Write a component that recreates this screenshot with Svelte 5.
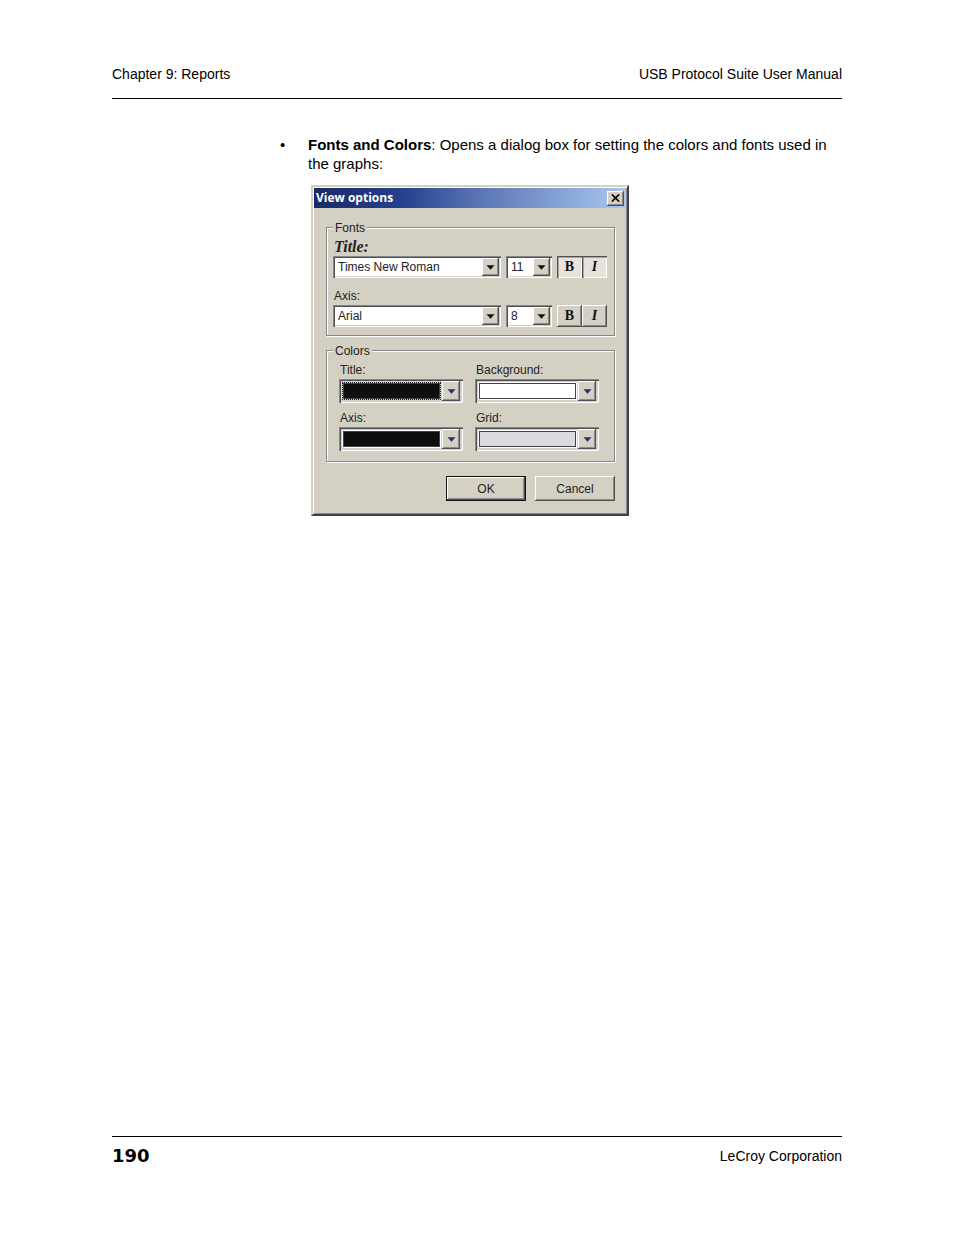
<script>
  const fontRows = $state([
    { id: 'title', label: 'Title:', font: 'Times New Roman', size: '11', bold: true, italic: true },
    { id: 'axis', label: 'Axis:', font: 'Arial', size: '8', bold: false, italic: false }
  ]);
  const fonts = ['Times New Roman', 'Arial'];
  const sizes = ['8', '11'];
  const colors = [
    { id: 'color-title', label: 'Title:', value: '#0e0e0c', focused: true },
    { id: 'color-background', label: 'Background:', value: '#ffffff' },
    { id: 'color-axis', label: 'Axis:', value: '#0e0e0c' },
    { id: 'color-grid', label: 'Grid:', value: '#dcdadc' }
  ];
</script>

{#snippet arrow()}
  <svg width="9" height="5" viewBox="0 0 9 5" aria-hidden="true"><path d="M0.5 0.3H8.5L4.5 4.7Z" fill="currentColor" /></svg>
{/snippet}

<div class="page">
  <header>
    <span>Chapter 9: Reports</span>
    <span>USB Protocol Suite User Manual</span>
  </header>

  <main>
    <ul>
      <li><p><strong>Fonts and Colors</strong>: Opens a dialog box for setting the colors and fonts used in the graphs:</p></li>
    </ul>

    <section class="dialog" role="dialog" aria-labelledby="dialog-title">
      <div class="titlebar">
        <span id="dialog-title">View options</span>
        <button class="close raised" aria-label="Close">
          <svg width="9" height="8" viewBox="0 0 9 8" aria-hidden="true"><path d="M0.8 0.3L8.2 7.7M8.2 0.3L0.8 7.7" stroke="#111" stroke-width="1.7" /></svg>
        </button>
      </div>

      <div class="content">
        <fieldset class="fonts">
          <legend>Fonts</legend>
          {#each fontRows as row}
            <div class="font-group">
              <label for={row.id} class:fancy={row.bold && row.italic}>{row.label}</label>
              <div class="font-row">
                <div class="combo wide">
                  <select id={row.id} bind:value={row.font}>
                    {#each fonts as f}<option>{f}</option>{/each}
                  </select>
                  <span class="drop raised">{@render arrow()}</span>
                </div>
                <div class="combo narrow">
                  <select aria-label="Size" bind:value={row.size}>
                    {#each sizes as s}<option>{s}</option>{/each}
                  </select>
                  <span class="drop raised">{@render arrow()}</span>
                </div>
                <div class="toggles">
                  <button class="toggle" class:pressed={row.bold} aria-pressed={row.bold} onclick={() => (row.bold = !row.bold)}>B</button>
                  <button class="toggle slanted" class:pressed={row.italic} aria-pressed={row.italic} onclick={() => (row.italic = !row.italic)}>I</button>
                </div>
              </div>
            </div>
          {/each}
        </fieldset>

        <fieldset class="colors">
          <legend>Colors</legend>
          {#each colors as c}
            <div class="color-group">
              <label for={c.id}>{c.label}</label>
              <button id={c.id} class="picker" aria-haspopup="listbox">
                <span class="frame" class:focused={c.focused}><span class="swatch" style:background={c.value}></span></span>
                <span class="drop raised">{@render arrow()}</span>
              </button>
            </div>
          {/each}
        </fieldset>

        <div class="actions">
          <button class="command default">OK</button>
          <button class="command">Cancel</button>
        </div>
      </div>
    </section>
  </main>

  <footer>
    <strong>190</strong>
    <span>LeCroy Corporation</span>
  </footer>
</div>

<style>
  :global(body) {
    margin: 0;
    background: #fff;
  }
  .page,
  .page * {
    box-sizing: border-box;
  }
  .page {
    display: flex;
    flex-direction: column;
    min-height: 100vh;
    padding: 64px 112px;
    color: #000;
    font-family: "Liberation Sans", Arial, sans-serif;
    font-size: 14px;
    line-height: 20px;
  }
  header,
  footer {
    display: flex;
    justify-content: space-between;
  }
  header {
    padding-bottom: 14px;
    border-bottom: 1px solid #000;
  }
  footer {
    align-items: center;
    margin-top: auto;
    padding: 9px 0 5px;
    border-top: 1px solid #000;
  }
  footer strong {
    font: 700 18px/20px "DejaVu Sans", sans-serif;
  }
  main {
    padding: 36px 0 36px 168px;
  }
  ul {
    margin: 0;
    padding: 0;
    list-style: none;
  }
  li {
    display: flex;
    font-size: 15px;
    line-height: 19px;
  }
  li::before {
    content: "•";
    flex: 0 0 28px;
  }
  p {
    margin: 0;
  }
  .dialog {
    width: 318px;
    margin: 12px 0 0 31px;
    padding: 1px;
    border: 2px solid;
    border-color: #d4d0c4 #42424a #42424a #d4d0c4;
    background: #d4d0c4;
    box-shadow: inset 1px 1px #fff, inset -1px -1px #8c8c8c;
    color: #222;
    font-size: 12px;
    line-height: 14px;
  }
  .titlebar {
    display: flex;
    align-items: center;
    justify-content: space-between;
    height: 20px;
    padding: 0 2px;
    background: linear-gradient(90deg, #1a2a66, #24408e 28%, #5470b0 50%, #a8c8f0);
    color: #fff;
    font: 700 12px/20px "Open Sans", sans-serif;
  }
  button {
    margin: 0;
    padding: 0;
    border: 0;
    border-radius: 0;
    color: inherit;
    background: #d4d0c4;
    font: inherit;
  }
  .raised,
  .toggle,
  .command {
    background: #d4d0c4;
    box-shadow: inset -1px -1px #505054, inset 1px 1px #fff, inset -2px -2px #8c8c8c;
  }
  .close,
  .drop {
    display: flex;
    align-items: center;
    justify-content: center;
  }
  .close {
    width: 17px;
    height: 15px;
  }
  .content {
    padding: 11px 11px 12px 12px;
  }
  fieldset {
    min-width: 0;
    margin: 0;
    border: 1px solid #86868a;
    box-shadow: 1px 1px #fff, inset 1px 1px #fff;
  }
  legend {
    padding: 2px 2px 0;
    background: #d4d0c4;
    line-height: 14px;
  }
  label {
    display: block;
  }
  .fonts {
    padding: 5px 6px 8px;
  }
  .font-group + .font-group {
    margin-top: 11px;
  }
  .font-group label {
    height: 16px;
    padding-left: 1px;
  }
  .font-group .fancy {
    font: italic 700 16px/14px "Liberation Serif", serif;
  }
  .font-row {
    display: flex;
    gap: 5px;
  }
  .combo {
    display: grid;
    grid-template-columns: 1fr 17px;
    height: 22px;
    padding: 2px;
    background: #fff;
    box-shadow: inset 1px 1px #86868a, inset 2px 2px #505054, inset -1px -1px #fff, inset -2px -2px #d4d0c4;
  }
  .combo select {
    grid-area: 1 / 1 / 2 / 3;
    min-width: 0;
    padding: 0 0 0 3px;
    border: 0;
    appearance: none;
    background: transparent;
    color: inherit;
    font: inherit;
  }
  .combo .drop {
    grid-area: 1 / 2;
    color: #111;
    pointer-events: none;
  }
  .wide {
    width: 168px;
  }
  .narrow {
    width: 46px;
  }
  .toggles {
    display: flex;
  }
  .toggle {
    width: 25px;
    height: 22px;
    color: #111;
    font: 700 14px/20px "Liberation Serif", serif;
  }
  .slanted {
    font-style: italic;
  }
  .pressed {
    background: #e6e3db;
    box-shadow: inset 1px 1px #505054, inset 2px 2px #a8a69e, inset -1px -1px #fff;
  }
  .colors {
    display: grid;
    grid-template-columns: 124px 124px;
    gap: 8px 12px;
    margin-top: 6px;
    padding: 5px 12px 10px;
  }
  .colors legend {
    margin-left: -6px;
  }
  .color-group label {
    height: 16px;
    padding-left: 1px;
  }
  .picker {
    display: flex;
    align-items: center;
    justify-content: space-between;
    width: 124px;
    height: 24px;
    padding: 2px 3px;
    box-shadow: inset 1px 1px #86868a, inset 2px 2px #505054, inset -1px -1px #fff;
  }
  .frame {
    width: 99px;
    height: 18px;
    border: 1px solid #fff;
  }
  .frame.focused {
    border: 1px dotted #222;
  }
  .swatch {
    display: block;
    height: 100%;
    border: 1px solid #42424a;
  }
  .picker .drop {
    width: 18px;
    height: 20px;
    color: #252c70;
  }
  .actions {
    display: flex;
    justify-content: flex-end;
    gap: 9px;
    margin-top: 14px;
  }
  .command {
    width: 80px;
    height: 25px;
  }
  .default {
    border: 1px solid #111;
  }
</style>
